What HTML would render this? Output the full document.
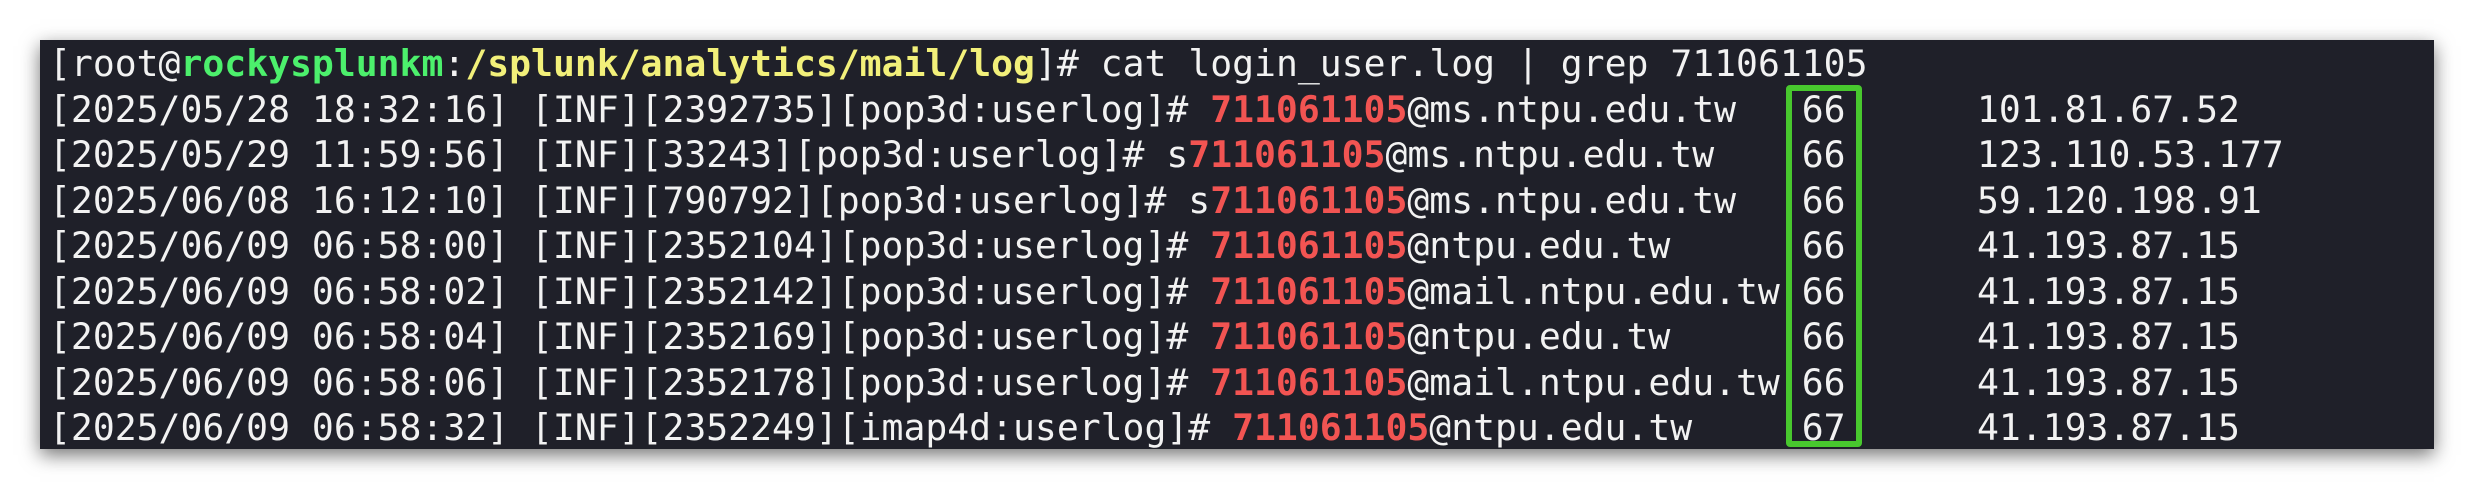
<!DOCTYPE html>
<html><head><meta charset="utf-8"><style>
html,body{margin:0;padding:0;background:#fff;width:2474px;height:490px;overflow:hidden}
.term{position:absolute;left:40px;top:40px;width:2394px;height:409px;background:#1f2029;box-shadow:0 6px 18px rgba(0,0,0,0.55)}
.lines{position:absolute;left:9px;top:1px;font-family:"DejaVu Sans Mono","Liberation Mono",monospace;font-size:36.4px;line-height:45.5px;color:#f2f2f2}
.row{position:relative;height:45.5px;white-space:pre}
.c1{position:absolute;left:80ch;top:0}
.c2{position:absolute;left:88ch;top:0}
.r{color:#f25452;font-weight:bold}
.g{color:#4cf06c;font-weight:bold}
.y{color:#f2f07a;font-weight:bold}
.box{position:absolute;left:1746px;top:45px;width:64px;height:350px;border:6px solid #48c82e;border-radius:4px}
</style></head><body>
<div class="term">
<div class="lines"><div class="row">[root@<span class="g">rockysplunkm</span>:<span class="y">/splunk/analytics/mail/log</span>]# cat login_user.log | grep 711061105</div><div class="row">[2025/05/28 18:32:16] [INF][2392735][pop3d:userlog]# <span class="r">711061105</span>@ms.ntpu.edu.tw<span class="c1">66</span><span class="c2">101.81.67.52</span></div><div class="row">[2025/05/29 11:59:56] [INF][33243][pop3d:userlog]# s<span class="r">711061105</span>@ms.ntpu.edu.tw<span class="c1">66</span><span class="c2">123.110.53.177</span></div><div class="row">[2025/06/08 16:12:10] [INF][790792][pop3d:userlog]# s<span class="r">711061105</span>@ms.ntpu.edu.tw<span class="c1">66</span><span class="c2">59.120.198.91</span></div><div class="row">[2025/06/09 06:58:00] [INF][2352104][pop3d:userlog]# <span class="r">711061105</span>@ntpu.edu.tw<span class="c1">66</span><span class="c2">41.193.87.15</span></div><div class="row">[2025/06/09 06:58:02] [INF][2352142][pop3d:userlog]# <span class="r">711061105</span>@mail.ntpu.edu.tw<span class="c1">66</span><span class="c2">41.193.87.15</span></div><div class="row">[2025/06/09 06:58:04] [INF][2352169][pop3d:userlog]# <span class="r">711061105</span>@ntpu.edu.tw<span class="c1">66</span><span class="c2">41.193.87.15</span></div><div class="row">[2025/06/09 06:58:06] [INF][2352178][pop3d:userlog]# <span class="r">711061105</span>@mail.ntpu.edu.tw<span class="c1">66</span><span class="c2">41.193.87.15</span></div><div class="row">[2025/06/09 06:58:32] [INF][2352249][imap4d:userlog]# <span class="r">711061105</span>@ntpu.edu.tw<span class="c1">67</span><span class="c2">41.193.87.15</span></div></div>
<div class="box"></div>
</div>
</body></html>
